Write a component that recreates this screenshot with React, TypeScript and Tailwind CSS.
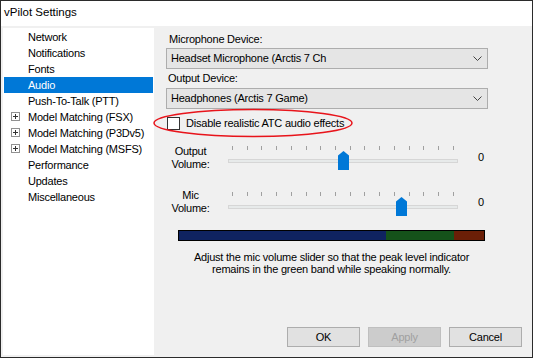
import React from 'react';

const treeItems = [
  { name: 'Network' },
  { name: 'Notifications' },
  { name: 'Fonts' },
  { name: 'Audio', active: true },
  { name: 'Push-To-Talk (PTT)' },
  { name: 'Model Matching (FSX)', expandable: true },
  { name: 'Model Matching (P3Dv5)', expandable: true },
  { name: 'Model Matching (MSFS)', expandable: true },
  { name: 'Performance' },
  { name: 'Updates' },
  { name: 'Miscellaneous' },
];

const PlusBox = () => (
  <span className="absolute left-[7px] top-[3px] w-[9px] h-[9px] border border-[#919191] bg-white flex items-center justify-center">
    <svg width="7" height="7" viewBox="0 0 7 7">
      <path d="M1 3.5h5M3.5 1v5" stroke="#333" strokeWidth="1" />
    </svg>
  </span>
);

const ComboBox = ({ value }: { value: string }) => (
  <div className="h-[21px] w-[322px] border border-[#adadad] bg-[#e5e5e5] flex items-center justify-between pl-[4px] pr-[5px]">
    <span className="leading-[13px]">{value}</span>
    <svg width="9" height="5" viewBox="0 0 9 5">
      <path d="M0.5 0.5L4.5 4.5L8.5 0.5" fill="none" stroke="#444" strokeWidth="1" />
    </svg>
  </div>
);

const Slider = ({ thumbLeft }: { thumbLeft: number }) => {
  const ticks = Array.from({ length: 16 });
  return (
    <div className="relative w-[230px] h-[27px]">
      <div className="absolute left-[4px] right-[4px] top-[2px] h-[4px] flex justify-between">
        {ticks.map((_, i) => (
          <span key={i} className="w-[1px] h-[4px] bg-[#a0a0a0]" />
        ))}
      </div>
      <div className="absolute left-0 right-0 top-[15px] h-[4px] bg-[#e7eaea] border border-[#d6d6d6]" />
      <div className="absolute top-[7px] w-[11px] h-[19px]" style={{ left: thumbLeft }}>
        <svg width="11" height="19" viewBox="0 0 11 19">
          <path d="M0 4.5L5.5 0L11 4.5V19H0Z" fill="#0078d7" />
        </svg>
      </div>
    </div>
  );
};

const SliderRow = ({ line1, thumbLeft, labelOffset, valueOffset }: { line1: string; thumbLeft: number; labelOffset: string; valueOffset: string }) => (
  <div className="flex items-start">
    <div className={`w-[49px] text-center leading-[13px] ${labelOffset}`}>
      <div>{line1}</div>
      <div>Volume:</div>
    </div>
    <div className="ml-[13px]">
      <Slider thumbLeft={thumbLeft} />
    </div>
    <div className={`ml-[20px] leading-[13px] ${valueOffset}`}>0</div>
  </div>
);

export default function App() {
  return (
    <div
      className="relative w-[533px] h-[358px] border border-[#2b2b2b] bg-[#f0f0f0] flex flex-col text-[11px] tracking-[-0.22px] text-black"
      style={{ fontFamily: '"Liberation Sans", Arial, sans-serif' }}
    >
      {/* Title bar */}
      <div className="h-[25px] bg-white flex items-center pl-[3px] pb-[1px] text-[11.5px] tracking-normal">
        vPilot Settings
      </div>

      <div className="flex-1 flex pl-[2px] pt-[2px] pb-[2px]">
        {/* Tree */}
        <div className="w-[151px] bg-white p-[1px]">
          {treeItems.map((item) => (
            <div
              key={item.name}
              className={`relative h-[16px] pl-[24px] flex items-center leading-[13px] ${
                item.active ? 'bg-[#0078d7] text-white' : ''
              }`}
            >
              {item.expandable && <PlusBox />}
              {item.name}
            </div>
          ))}
        </div>

        {/* Audio settings */}
        <div className="flex-1 flex flex-col pl-[12px]">
          <div className="mt-[5px] ml-[3px] leading-[13px]">Microphone Device:</div>
          <div className="mt-[2px]">
            <ComboBox value="Headset Microphone (Arctis 7 Ch" />
          </div>
          <div className="mt-[3px] ml-[2px] leading-[13px]">Output Device:</div>
          <div className="mt-[3px]">
            <ComboBox value="Headphones (Arctis 7 Game)" />
          </div>

          <div className="mt-[8px] flex items-center h-[13px]">
            <span className="ml-[1px] w-[13px] h-[13px] border border-[#333] bg-white" />
            <span className="ml-[6px] leading-[13px]">Disable realistic ATC audio effects</span>
          </div>

          <div className="mt-[14px]">
            <SliderRow line1="Output" thumbLeft={110} labelOffset="mt-[1px]" valueOffset="mt-[7px]" />
          </div>
          <div className="mt-[19px]">
            <SliderRow line1="Mic" thumbLeft={168} labelOffset="-mt-[1px]" valueOffset="mt-[6px]" />
          </div>

          <div className="mt-[13px] ml-[12px] w-[307px] h-[11px] border border-black flex">
            <div className="w-[207px] bg-[#0f2360]" />
            <div className="w-[68px] bg-[#15521a]" />
            <div className="flex-1 bg-[#6b1f07]" />
          </div>
          <div className="mt-[10px] ml-[12px] w-[307px] text-center leading-[12px]">
            Adjust the mic volume slider so that the peak level indicator
            <br />
            remains in the green band while speaking normally.
          </div>

          <div className="mt-auto flex justify-end gap-[8px] pr-[10px] pb-[8px]">
            <button className="w-[73px] h-[20px] border border-[#adadad] bg-[#e1e1e1] leading-[13px]">OK</button>
            <button className="w-[73px] h-[20px] border border-[#bfbfbf] bg-[#cccccc] text-[#a0a0a0] leading-[13px]">Apply</button>
            <button className="w-[73px] h-[20px] border border-[#adadad] bg-[#e1e1e1] leading-[13px]">Cancel</button>
          </div>
        </div>
      </div>

      {/* Annotation */}
      <svg className="absolute left-0 top-0 pointer-events-none" width="533" height="358">
        <ellipse cx="252" cy="122" rx="99" ry="13.5" fill="none" stroke="#e8141b" strokeWidth="1.5" />
      </svg>
    </div>
  );
}
